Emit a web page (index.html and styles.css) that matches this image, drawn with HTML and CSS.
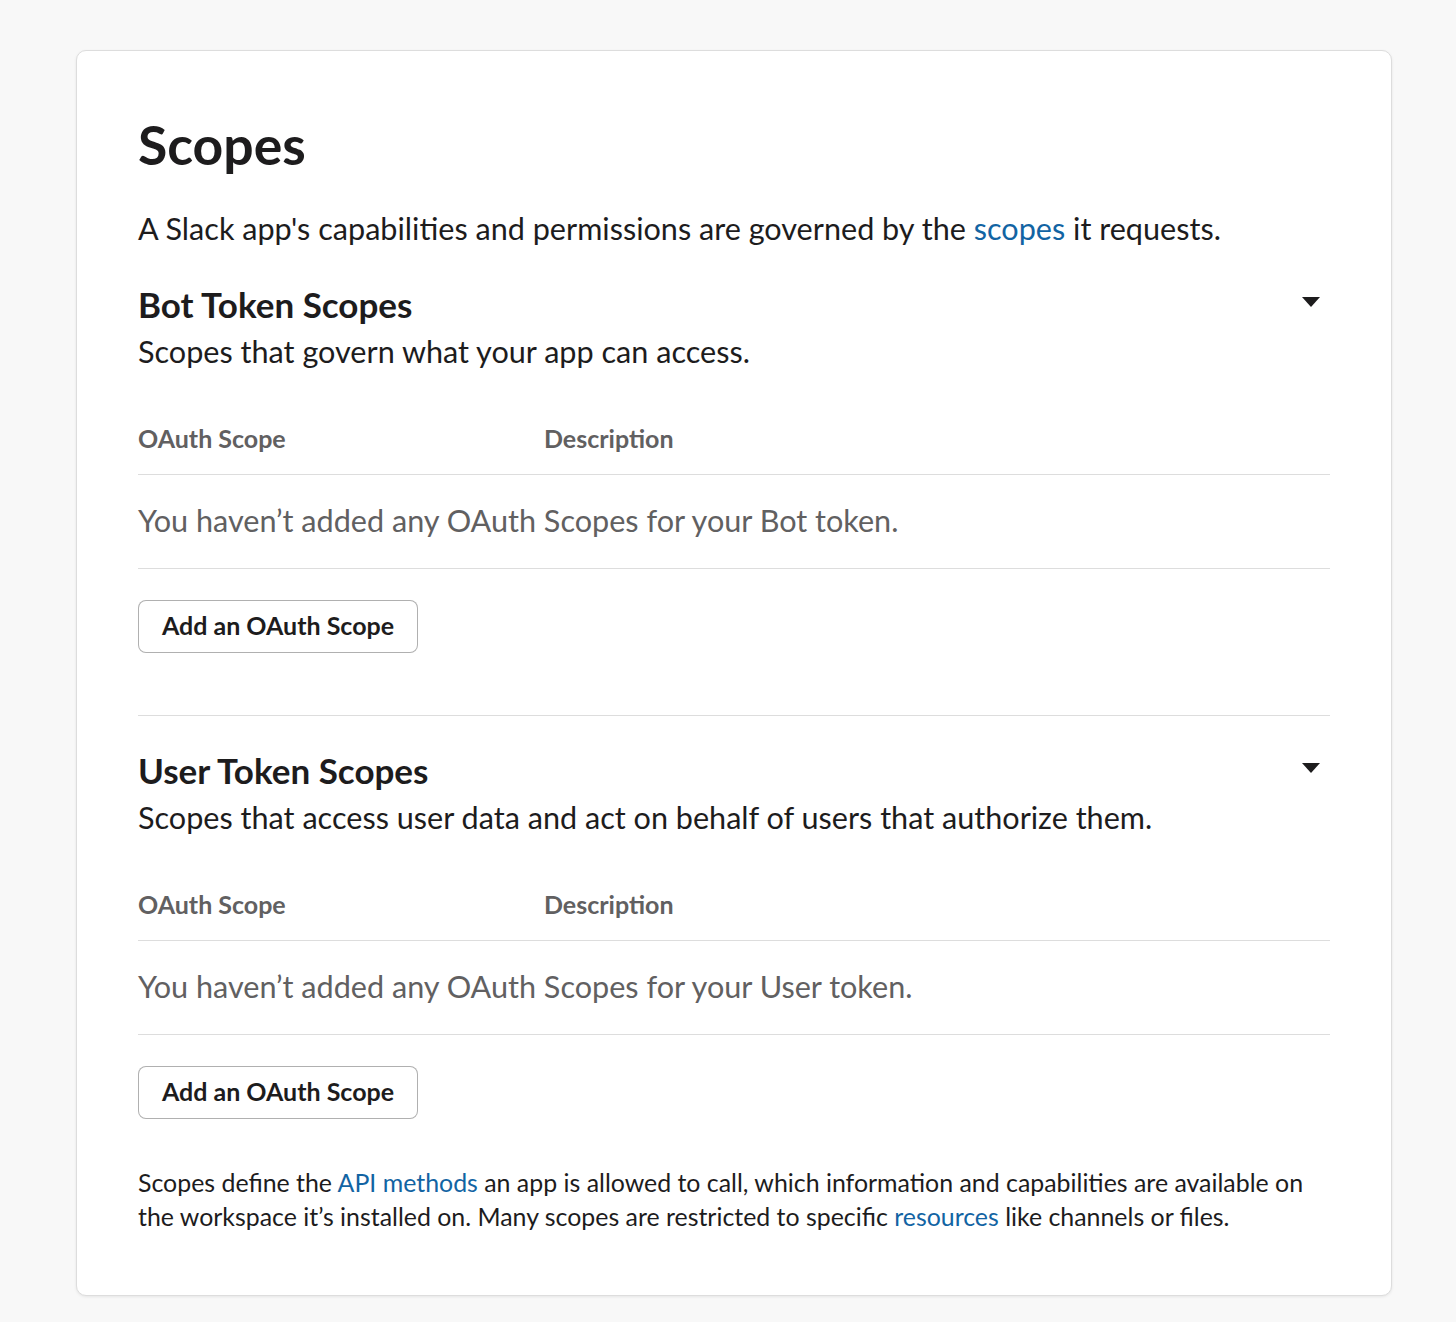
FILE: index.html
```html
<!DOCTYPE html>
<html lang="en">
<head>
<meta charset="utf-8">
<title>Scopes</title>
<link rel="stylesheet" href="styles.css">
</head>
<body>
<div class="card">
  <h1 class="title">Scopes</h1>
  <p class="intro">A Slack app's capabilities and permissions are governed by the <a href="#">scopes</a> it requests.</p>

  <section class="scope-section">
    <div class="section-head">
      <div class="section-text">
        <h2 class="section-title">Bot Token Scopes</h2>
        <p class="section-sub">Scopes that govern what your app can access.</p>
      </div>
      <svg class="caret" width="18" height="10" viewBox="0 0 18 10"><path d="M0 0 H18 L9 10 Z" fill="#1d1c1d"/></svg>
    </div>
    <div class="table">
      <div class="table-head">
        <span class="col-scope">OAuth Scope</span>
        <span class="col-desc">Description</span>
      </div>
      <div class="table-empty">You haven’t added any OAuth Scopes for your Bot token.</div>
    </div>
    <button class="btn">Add an OAuth Scope</button>
  </section>

  <section class="scope-section scope-section--user">
    <div class="section-head">
      <div class="section-text">
        <h2 class="section-title">User Token Scopes</h2>
        <p class="section-sub">Scopes that access user data and act on behalf of users that authorize them.</p>
      </div>
      <svg class="caret" width="18" height="10" viewBox="0 0 18 10"><path d="M0 0 H18 L9 10 Z" fill="#1d1c1d"/></svg>
    </div>
    <div class="table">
      <div class="table-head">
        <span class="col-scope">OAuth Scope</span>
        <span class="col-desc">Description</span>
      </div>
      <div class="table-empty">You haven’t added any OAuth Scopes for your User token.</div>
    </div>
    <button class="btn">Add an OAuth Scope</button>
  </section>

  <p class="footer-note">Scopes define the <a href="#">API methods</a> an app is allowed to call, which information and capabilities are available on the workspace it’s installed on. Many scopes are restricted to specific <a href="#">resources</a> like channels or files.</p>
</div>
</body>
</html>
```

FILE: styles.css
```css
* { box-sizing: border-box; }

html, body {
  margin: 0;
  background: #f8f8f8;
}

body {
  padding: 50px 64px 26px 76px;
  font-family: Lato, "Noto Sans", sans-serif;
  color: #1d1c1d;
}

a {
  color: #1264a3;
  text-decoration: none;
}

.card {
  background: #fff;
  border: 1px solid #dddddd;
  border-radius: 10px;
  box-shadow: 0 1px 3px rgba(0, 0, 0, 0.08);
  padding: 59px 61px 62px 61px;
}

.title {
  margin: 0;
  font-size: 53.5px;
  line-height: 69px;
  font-weight: 700;
}

.intro {
  margin: 30px 0 0;
  font-size: 30.6px;
  line-height: 40px;
}

.scope-section {
  margin-top: 33px;
}

.scope-section--user {
  margin-top: 62px;
  border-top: 1px solid #dddddd;
  padding-top: 32px;
}

.section-head {
  display: flex;
  justify-content: space-between;
  align-items: flex-start;
}

.section-title {
  margin: 0;
  font-size: 35px;
  line-height: 44px;
  font-weight: 700;
}

.section-sub {
  margin: 8px 0 0;
  font-size: 30.6px;
  line-height: 36px;
}

.caret {
  margin-top: 15px;
  margin-right: 10px;
  flex: none;
}

.table {
  margin-top: 52px;
}

.table-head {
  display: flex;
  font-size: 25px;
  line-height: 32px;
  font-weight: 700;
  color: #616061;
  padding-bottom: 20px;
  border-bottom: 1px solid #dddddd;
}

.col-scope {
  width: 406px;
  flex: none;
}

.table-empty {
  font-size: 30.6px;
  line-height: 36px;
  color: #616061;
  padding: 28px 0 29px;
  border-bottom: 1px solid #dddddd;
}

.btn {
  display: block;
  margin-top: 31px;
  width: 280px;
  height: 53px;
  padding: 0 0 3px;
  background: #fff;
  border: 1px solid rgba(29, 28, 29, 0.35);
  border-radius: 8px;
  font-family: Lato, "Noto Sans", sans-serif;
  font-size: 25px;
  font-weight: 700;
  color: #1d1c1d;
}

.footer-note {
  margin: 46px 0 0;
  font-size: 24.9px;
  line-height: 34px;
}
```
